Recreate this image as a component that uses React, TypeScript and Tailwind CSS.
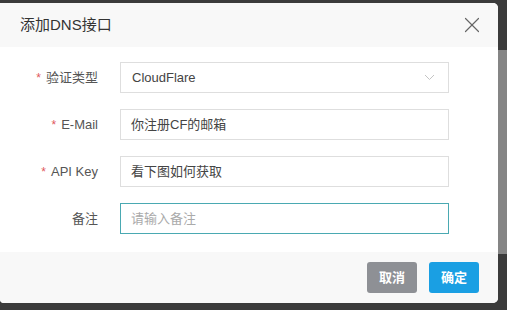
import { X } from "lucide-react";

const font = {
  fontFamily: '"Helvetica Neue", "Liberation Sans", "Noto Sans CJK SC", sans-serif',
};

function Row({
  label,
  required,
  children,
}: {
  label: string;
  required?: boolean;
  children: React.ReactNode;
}) {
  return (
    <div className="flex items-center h-[31px]">
      <div className="w-[98px] text-right text-[13px] text-[#555]">
        {required && <span className="text-[#e0575b] mr-[5px] text-[12px]">*</span>}
        {label}
      </div>
      <div className="ml-[22px] w-[329px] h-full">{children}</div>
    </div>
  );
}

export default function App() {
  return (
    <div className="w-[507px] h-[310px] bg-[#3b3b3b] flex overflow-hidden" style={font}>
      {/* Modal */}
      <div className="w-[498px] h-[300px] mt-[3px] bg-white rounded-r-[5px] rounded-bl-[4px] overflow-hidden flex flex-col">
        <div className="h-[44px] bg-[#f8f8f8] flex items-center justify-between pl-[20px] pr-[13px] shrink-0">
          <h1 className="text-[15px] text-[#333]">添加DNS接口</h1>
          <X className="w-[26px] h-[26px] text-[#666]" strokeWidth={1.1} />
        </div>

        <div className="flex-1 flex flex-col gap-[16px] pt-[15px]">
          <Row label="验证类型" required>
            <div className="h-full border border-[#dedede] flex items-center justify-between px-[11px] text-[13px] text-[#444]">
              <span>CloudFlare</span>
              <svg width="11" height="7" viewBox="0 0 11 7" className="mr-[2px]">
                <path d="M1 1l4.5 4.5L10 1" fill="none" stroke="#c4c4c4" strokeWidth="1" />
              </svg>
            </div>
          </Row>
          <Row label="E-Mail" required>
            <div className="h-full border border-[#dedede] flex items-center px-[10px] text-[13px] text-[#444]">
              你注册CF的邮箱
            </div>
          </Row>
          <Row label="API Key" required>
            <div className="h-full border border-[#dedede] flex items-center px-[10px] text-[13px] text-[#444]">
              看下图如何获取
            </div>
          </Row>
          <Row label="备注">
            <input
              className="w-full h-full border border-[#4aa9b2] outline-none px-[10px] text-[13px] text-[#333] placeholder:text-[#aaa]"
              placeholder="请输入备注"
            />
          </Row>
        </div>

        <div className="h-[51px] bg-[#f8f8f8] flex items-start justify-end gap-[12px] pt-[10px] pr-[19px] shrink-0">
          <button className="w-[50px] h-[31px] rounded-[3px] bg-[#8e9095] text-white text-[13px] font-semibold">
            取消
          </button>
          <button className="w-[50px] h-[31px] rounded-[3px] bg-[#1a9fe3] text-white text-[13px] font-semibold">
            确定
          </button>
        </div>
      </div>

      {/* background page peeking through */}
      <div className="flex-1 flex flex-col pt-[50px]">
        <div className="h-[204px] bg-[#858585]" />
      </div>
    </div>
  );
}
